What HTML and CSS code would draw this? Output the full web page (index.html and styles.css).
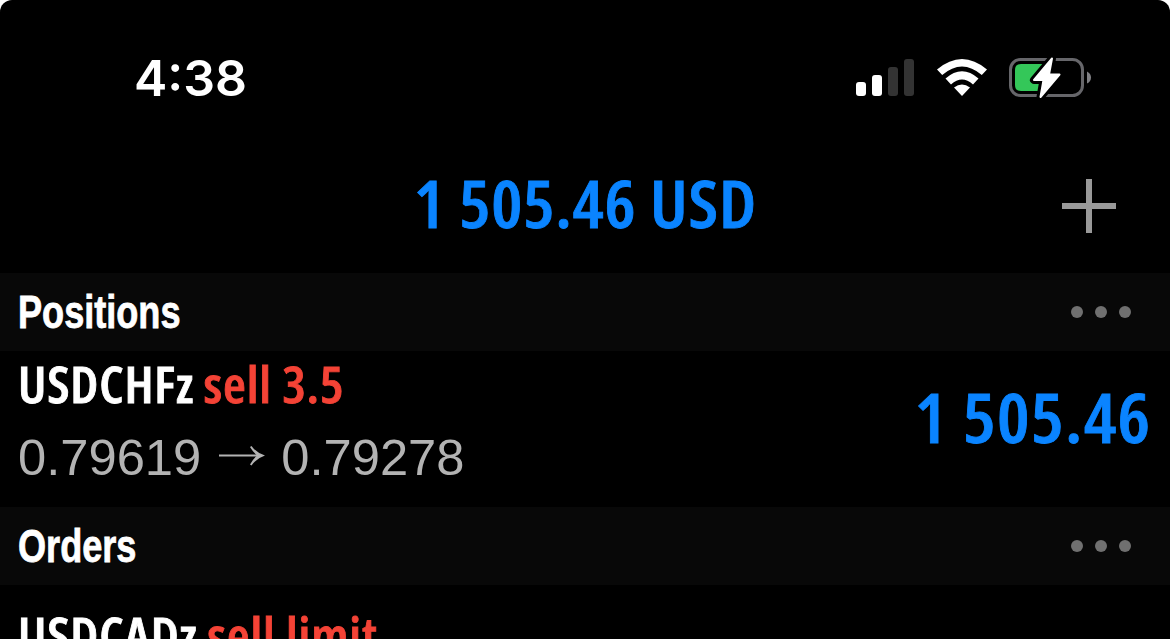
FILE: index.html
```html
<!DOCTYPE html>
<html lang="en">
<head>
    <meta charset="UTF-8">
    <title>Trade</title>
    <link rel="stylesheet" href="styles.css">
</head>
<body>
    <div class="screen">
        <div class="status-bar">
            <span class="time">4:38</span>
            <div class="status-icons">
                <svg class="signal" width="58" height="38" viewBox="0 0 58 38">
                    <rect x="0" y="23" width="10" height="14" rx="3" fill="#fff"/>
                    <rect x="16" y="16" width="10" height="21" rx="3" fill="#fff"/>
                    <rect x="32" y="8" width="10" height="29" rx="3" fill="#333"/>
                    <rect x="48" y="0" width="10" height="37" rx="3" fill="#333"/>
                </svg>
                <svg class="wifi" width="50" height="38" viewBox="0 0 50 38">
                    <path d="M0 10.5 Q25 -10.5 50 10.5 L44.8 16 Q25 -1 5.200 16 Z" fill="#fff"/>
                    <path d="M8.5 19.5 Q25 5 41.5 19.5 L36 25.500 Q25 15.500 14 25.500 Z" fill="#fff"/>
                    <path d="M17 28.500 Q25 22.500 33 28.500 L25 37 Z" fill="#fff"/>
                </svg>
                <svg class="battery" width="84" height="42" viewBox="0 0 84 42">
                    <rect x="1.500" y="2.500" width="72" height="36" rx="10" fill="none" stroke="#66666a" stroke-width="3"/>
                    <path d="M78 14.500 Q82 16.500 82 20.500 Q82 24.500 78 26.500 Z" fill="#808084"/>
                    <path d="M12 7 H38 V34 H12 Q6 34 6 28 V13 Q6 7 12 7 Z" fill="#34c759"/>
                    <path d="M43 1.500 L25 23 H34.500 L31.500 40 L50.500 17.500 H40 Z" fill="#000" stroke="#000" stroke-width="8" stroke-linejoin="round"/>
                    <path d="M43 1.500 L25 23 H34.500 L31.500 40 L50.500 17.500 H40 Z" fill="#fff" stroke="#fff" stroke-width="2" stroke-linejoin="round"/>
                </svg>
            </div>
        </div>

        <div class="header">
            <h1 class="balance">1 505.46 USD</h1>
            <svg class="add" width="54" height="54" viewBox="0 0 54 54">
                <path d="M27 0 V54 M0 27 H54" stroke="#999" stroke-width="6"/>
            </svg>
        </div>

        <div class="section">
            <h2 class="section-title">Positions</h2>
            <div class="dots"><i></i><i></i><i></i></div>
        </div>

        <div class="position">
            <div class="info">
                <div class="deal"><span class="symbol">USDCHFz</span><span class="side">sell 3.5</span></div>
                <div class="prices">
                    <span>0.79619</span>
                    <svg width="47" height="22" viewBox="0 0 47 22">
                        <path d="M1 8.500 H42" stroke="#b3b3b3" stroke-width="2"/>
                        <path d="M32 0 L33.500 -1 Q38 5.500 47 8.500 Q38 11.500 33.500 18.500 L32 17.500 Q35 12 39 8.500 Q35 5 32 0 Z" fill="#b3b3b3"/>
                    </svg>
                    <span>0.79278</span>
                </div>
            </div>
            <div class="profit">1 505.46</div>
        </div>

        <div class="section">
            <h2 class="section-title">Orders</h2>
            <div class="dots"><i></i><i></i><i></i></div>
        </div>

        <div class="order">
            <div class="deal"><span class="symbol">USDCADz</span><span class="side">sell limit</span></div>
        </div>
    </div>
</body>
</html>
```
FILE: styles.css
```css
* {
    box-sizing: border-box;
}
body {
    margin: 0;
    background: #fff;
}
.screen {
    width: 1170px;
    height: 639px;
    overflow: hidden;
    background: #000;
    border-radius: 12px 12px 0 0;
    color: #fff;
    font-family: "Open Sans", "Noto Sans", sans-serif;
}
svg {
    overflow: visible;
}

/* status bar */
.status-bar {
    display: flex;
    justify-content: space-between;
    align-items: center;
    height: 139px;
    padding: 17px 77px 0 134px;
}
.time {
    font: 600 50px/60px Inter, sans-serif;
}
.status-icons {
    display: flex;
    align-items: center;
    gap: 23px;
}
.battery {
    margin-left: -1px;
}

/* condensed face used for symbols and amounts */
.balance,
.deal,
.profit {
    font-weight: 600;
    font-stretch: 75%;
    letter-spacing: 0.8px;
    white-space: nowrap;
    -webkit-text-stroke: 0.8px currentColor;
}

/* account balance */
.header {
    display: grid;
    grid-template-columns: 1fr auto 1fr;
    align-items: center;
    height: 134px;
    padding: 0 54px;
}
.balance {
    grid-column: 2;
    margin: 0 0 7px;
    color: #0a84ff;
    font-size: 65px;
    line-height: 80px;
    transform: scaleX(1.07);
}
.add {
    justify-self: end;
}

/* section headers */
.section {
    display: flex;
    justify-content: space-between;
    align-items: center;
    height: 78px;
    padding: 0 39px 0 18px;
    background: #080808;
}
.section-title {
    margin: 0;
    font: bold 46px/60px "Liberation Sans", sans-serif;
    transform: scaleX(0.785);
    transform-origin: left;
    -webkit-text-stroke: 0.8px currentColor;
}
.dots {
    display: flex;
    gap: 12px;
}
.dots i {
    width: 12px;
    height: 12px;
    border-radius: 50%;
    background: #707070;
}

/* rows */
.position {
    display: flex;
    justify-content: space-between;
    height: 156px;
    padding: 0 18px;
}
.deal {
    display: flex;
    gap: 9px;
    height: 70px;
    font-size: 50px;
    line-height: 66px;
    transform: scaleX(1.05);
    transform-origin: left;
}
.side {
    color: #f44336;
}
.prices {
    display: flex;
    align-items: center;
    gap: 16.5px;
    height: 74px;
    color: #b3b3b3;
    font: 50.7px/74px "Liberation Sans", sans-serif;
}
.profit {
    color: #0a84ff;
    font-size: 68px;
    line-height: 131px;
    letter-spacing: 1.3px;
    transform: scaleX(1.07);
    transform-origin: right;
}
.order {
    padding: 17px 18px 0;
}
```
